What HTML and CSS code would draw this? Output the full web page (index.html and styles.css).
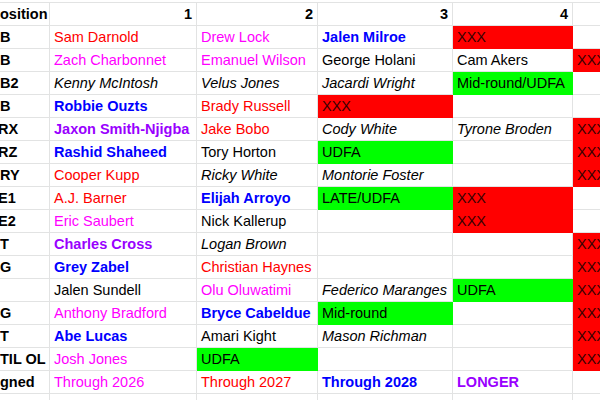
FILE: index.html
```html
<!DOCTYPE html>
<html>
<head>
<meta charset="utf-8">
<link rel="stylesheet" href="styles.css">
</head>
<body>
<div class="sheet">
  <div class="c lab">osition</div><div class="c num">1</div><div class="c num">2</div><div class="c num">3</div><div class="c num">4</div><div class="c"></div>

  <div class="c lab">B</div><div class="c red">Sam Darnold</div><div class="c mag">Drew Lock</div><div class="c blu">Jalen Milroe</div><div class="c fr">XXX</div><div class="c"></div>

  <div class="c lab">B</div><div class="c mag">Zach Charbonnet</div><div class="c mag">Emanuel Wilson</div><div class="c">George Holani</div><div class="c">Cam Akers</div><div class="c fr">XXX</div>

  <div class="c lab">B2</div><div class="c it">Kenny McIntosh</div><div class="c it">Velus Jones</div><div class="c it">Jacardi Wright</div><div class="c fg">Mid-round/UDFA</div><div class="c"></div>

  <div class="c lab">B</div><div class="c blu">Robbie Ouzts</div><div class="c red">Brady Russell</div><div class="c fr">XXX</div><div class="c"></div><div class="c"></div>

  <div class="c lab cut">RX</div><div class="c pur">Jaxon Smith-Njigba</div><div class="c red">Jake Bobo</div><div class="c it">Cody White</div><div class="c it">Tyrone Broden</div><div class="c fr">XXX</div>

  <div class="c lab cut">RZ</div><div class="c blu">Rashid Shaheed</div><div class="c">Tory Horton</div><div class="c fg">UDFA</div><div class="c"></div><div class="c fr">XXX</div>

  <div class="c lab">RY</div><div class="c red">Cooper Kupp</div><div class="c it">Ricky White</div><div class="c it">Montorie Foster</div><div class="c"></div><div class="c fr">XXX</div>

  <div class="c lab cut">E1</div><div class="c red">A.J. Barner</div><div class="c blu">Elijah Arroyo</div><div class="c fg">LATE/UDFA</div><div class="c fr">XXX</div><div class="c"></div>

  <div class="c lab cut">E2</div><div class="c mag">Eric Saubert</div><div class="c">Nick Kallerup</div><div class="c"></div><div class="c fr">XXX</div><div class="c"></div>

  <div class="c lab">T</div><div class="c pur">Charles Cross</div><div class="c it">Logan Brown</div><div class="c"></div><div class="c"></div><div class="c fr">XXX</div>

  <div class="c lab">G</div><div class="c blu">Grey Zabel</div><div class="c red">Christian Haynes</div><div class="c"></div><div class="c"></div><div class="c fr">XXX</div>

  <div class="c lab"></div><div class="c">Jalen Sundell</div><div class="c mag">Olu Oluwatimi</div><div class="c it">Federico Maranges</div><div class="c fg">UDFA</div><div class="c fr">XXX</div>

  <div class="c lab">G</div><div class="c mag">Anthony Bradford</div><div class="c blu">Bryce Cabeldue</div><div class="c fg">Mid-round</div><div class="c"></div><div class="c fr">XXX</div>

  <div class="c lab">T</div><div class="c blu">Abe Lucas</div><div class="c">Amari Kight</div><div class="c it">Mason Richman</div><div class="c"></div><div class="c fr">XXX</div>

  <div class="c lab">TIL OL</div><div class="c mag">Josh Jones</div><div class="c fg">UDFA</div><div class="c"></div><div class="c"></div><div class="c fr">XXX</div>

  <div class="c lab">gned</div><div class="c mag">Through 2026</div><div class="c red">Through 2027</div><div class="c blu">Through 2028</div><div class="c pur">LONGER</div><div class="c"></div>

  <div class="c lab"></div><div class="c"></div><div class="c"></div><div class="c"></div><div class="c"></div><div class="c"></div>
</div>
</body>
</html>
```

FILE: styles.css
```css
html, body {
  margin: 0;
  padding: 0;
  background: #ffffff;
  overflow: hidden;
}

body {
  width: 600px;
  height: 400px;
  font-family: "Liberation Sans", Arial, sans-serif;
  font-size: 14.5px;
  color: #000000;
}

.sheet {
  display: grid;
  grid-template-columns: 50px 147px 121px 135px 120px 127px;
  grid-auto-rows: 23px;
  margin-top: 2px;
  border-top: 1px solid #e2e3e3;
  width: 700px;
}

.c {
  box-sizing: border-box;
  border-right: 1px solid #e2e3e3;
  border-bottom: 1px solid #e2e3e3;
  padding: 1px 4px 0 4px;
  line-height: 21px;
  white-space: nowrap;
  overflow: hidden;
}

.lab {
  font-weight: bold;
  padding-left: 0;
}

.cut {
  text-indent: -2px;
}

.num {
  font-weight: bold;
  text-align: right;
}

.red { color: #ff0000; }
.mag { color: #ff00ff; }
.blu { color: #0000ff; font-weight: bold; }
.pur { color: #9900ff; font-weight: bold; }
.it { font-style: italic; }

.fr {
  background: #ff0000;
  border-color: #ff0000;
  color: #3a0000;
}

.fg {
  background: #00ff00;
  border-color: #00ff00;
  color: #000000;
}
```
